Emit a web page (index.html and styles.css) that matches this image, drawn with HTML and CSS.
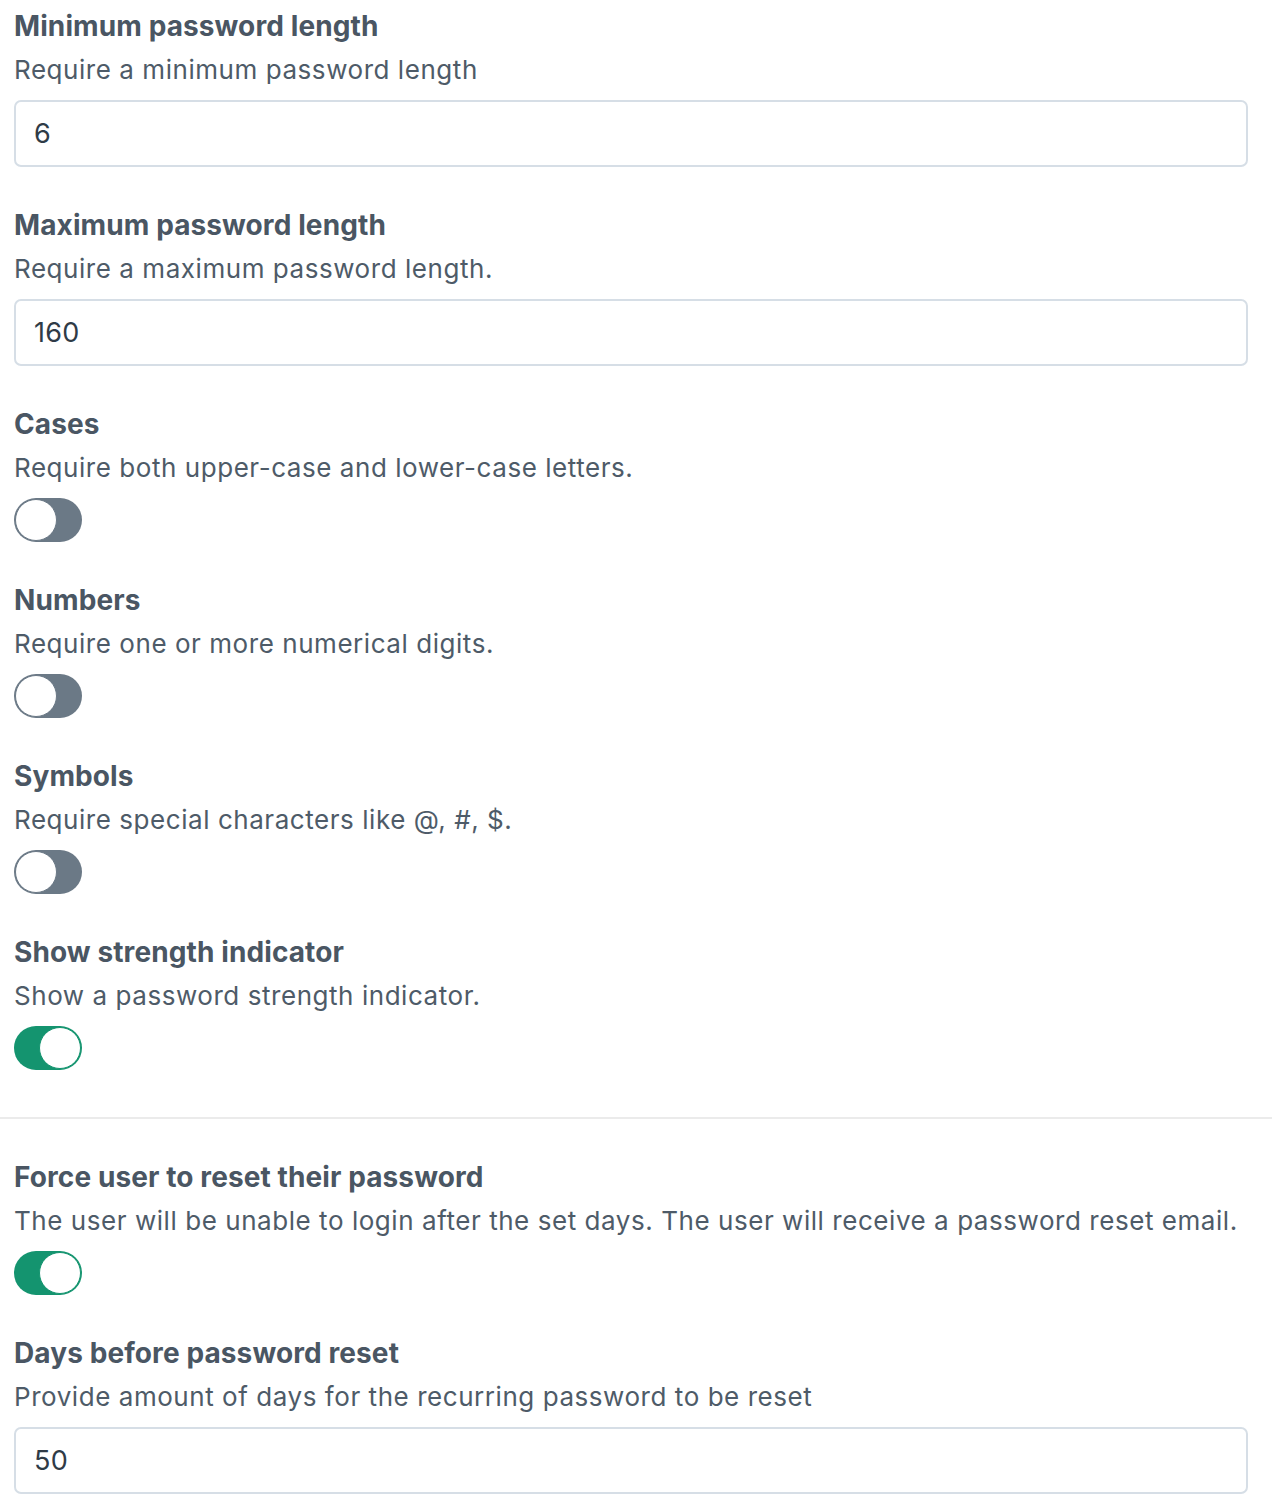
FILE: index.html
```html
<!DOCTYPE html>
<html lang="en">
<head>
<meta charset="utf-8">
<title>Password settings</title>
<link rel="stylesheet" href="styles.css">
</head>
<body>
<div class="settings">
  <div class="field">
    <div class="label">Minimum password length</div>
    <div class="desc">Require a minimum password length</div>
    <div class="input">6</div>
  </div>
  <div class="field">
    <div class="label">Maximum password length</div>
    <div class="desc">Require a maximum password length.</div>
    <div class="input">160</div>
  </div>
  <div class="field">
    <div class="label">Cases</div>
    <div class="desc">Require both upper-case and lower-case letters.</div>
    <div class="toggle"><span class="knob"></span></div>
  </div>
  <div class="field">
    <div class="label">Numbers</div>
    <div class="desc">Require one or more numerical digits.</div>
    <div class="toggle"><span class="knob"></span></div>
  </div>
  <div class="field">
    <div class="label">Symbols</div>
    <div class="desc">Require special characters like @, #, $.</div>
    <div class="toggle"><span class="knob"></span></div>
  </div>
  <div class="field">
    <div class="label">Show strength indicator</div>
    <div class="desc">Show a password strength indicator.</div>
    <div class="toggle on"><span class="knob"></span></div>
  </div>
  <hr class="divider">
  <div class="field">
    <div class="label">Force user to reset their password</div>
    <div class="desc">The user will be unable to login after the set days. The user will receive a password reset email.</div>
    <div class="toggle on"><span class="knob"></span></div>
  </div>
  <div class="field">
    <div class="label">Days before password reset</div>
    <div class="desc">Provide amount of days for the recurring password to be reset</div>
    <div class="input">50</div>
  </div>
</div>
</body>
</html>
```

FILE: styles.css
```css
html, body {
  margin: 0;
  padding: 0;
  background: #ffffff;
}
body {
  font-family: Inter, "Noto Sans", sans-serif;
  color: #4a5562;
}
.settings {
  padding: 6px 24px 0 14px;
  display: flex;
  flex-direction: column;
}
.field {
  display: flex;
  flex-direction: column;
  padding-bottom: 38px;
}
.label {
  font-size: 28px;
  font-weight: 700;
  line-height: 40px;
  letter-spacing: 0.1px;
  color: #4a5663;
}
.desc {
  font-size: 26px;
  line-height: 40px;
  letter-spacing: 0.55px;
  margin-top: 4px;
  color: #4e5b68;
}
.input {
  box-sizing: border-box;
  margin-top: 10px;
  height: 67px;
  border: 2px solid #d6dee6;
  border-radius: 7px;
  padding: 0 18px;
  display: flex;
  align-items: center;
  font-size: 27px;
  letter-spacing: 0.3px;
  color: #2f3b47;
}
.toggle {
  margin-top: 10px;
  width: 68px;
  height: 44px;
  border-radius: 22px;
  background: #6b7986;
  position: relative;
}
.knob {
  position: absolute;
  left: 1px;
  top: 1px;
  box-sizing: border-box;
  width: 42px;
  height: 42px;
  border-radius: 50%;
  background: #ffffff;
  border: 1.5px solid #6b7986;
}
.toggle.on {
  background: #14946f;
}
.toggle.on .knob {
  left: 25px;
  border-color: #14946f;
}
.divider {
  border: 0;
  height: 2px;
  background: #ebebeb;
  margin: 9px -24px 38px -14px;
}
```
